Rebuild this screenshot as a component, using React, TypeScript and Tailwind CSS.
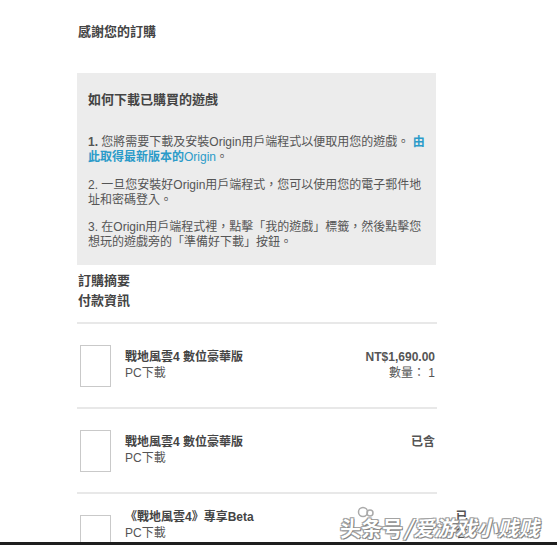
const FONT = "font-['Liberation_Sans','Noto_Sans_CJK_TC',sans-serif]";

type ItemData = { title: string; sub: string; right: string; qty?: string; extra?: string; lift?: boolean };

const items: ItemData[] = [
  { title: "戰地風雲4 數位豪華版", sub: "PC下載", right: "NT$1,690.00", qty: "數量： 1" },
  { title: "戰地風雲4 數位豪華版", sub: "PC下載", right: "已含" },
  {
    title: "《戰地風雲4》專享Beta",
    sub: "PC下載",
    right: "已含",
    extra: "可搶先參與《戰地風雲4》封閉測試，並於開放測試前取得資格",
    lift: true,
  },
];

const Divider = () => <div className="h-[2px] bg-[#e8e8e8]" />;

const Item = ({ title, sub, right, qty, extra, lift }: ItemData) => (
  <div className="flex pt-[21px] pb-[20px]">
    <div className="w-[31px] h-[42px] ml-[3px] border border-[#c9c9c9] bg-white shrink-0" />
    <div className={`flex-1 pl-[14px] text-[12px] leading-[16px] ${lift ? "-mt-[6px]" : "pt-[4px]"}`}>
      <div className="font-bold text-[#444]">{title}</div>
      <div className="text-[#555]">{sub}</div>
      {extra && <div className="text-[#555] whitespace-nowrap">{extra}</div>}
    </div>
    <div className={`text-right text-[12px] leading-[16px] pr-[2px] ${lift ? "-mt-[6px]" : "pt-[4px]"}`}>
      <div className="font-bold text-[#555]">{right}</div>
      {qty && <div className="text-[#555]">{qty}</div>}
    </div>
  </div>
);

export default function App() {
  return (
    <div className={`relative w-full h-[545px] bg-white overflow-hidden flex flex-col ${FONT}`}>
      <div className="flex-1 overflow-hidden">
        <div className="ml-[77px] w-[360px] pt-[24px]">
          <h1 className="pl-px text-[13px] leading-[16px] font-bold text-[#444]">感謝您的訂購</h1>

          {/* How to download */}
          <div className="mt-[33px] bg-[#ececec] px-[11px] pt-[19px] pb-[15px] w-[359px]">
            <h2 className="text-[13px] leading-[16px] font-bold text-[#444]">如何下載已購買的遊戲</h2>
            <div className="mt-[27px] text-[12px] leading-[15px] text-[#555] whitespace-nowrap">
              <p>
                <span className="font-bold">1.</span> 您將需要下載及安裝Origin用戶端程式以便取用您的遊戲。{" "}
                <span className="font-bold text-[#2b9bc9]">由</span>
                <br />
                <span className="font-bold text-[#2b9bc9]">此取得最新版本的</span>
                <span className="text-[#2b9bc9]">Origin</span>。
              </p>
              <p className="mt-[13px]">
                2. 一旦您安裝好Origin用戶端程式，您可以使用您的電子郵件地
                <br />
                址和密碼登入。
              </p>
              <p className="mt-[12px]">
                3. 在Origin用戶端程式裡，點擊「我的遊戲」標籤，然後點擊您
                <br />
                想玩的遊戲旁的「準備好下載」按鈕。
              </p>
            </div>
          </div>

          <div className="mt-[8px] pl-px text-[13px] leading-[16px] font-bold text-[#444]">訂購摘要</div>
          <div className="mt-[4px] pl-px text-[13px] leading-[16px] font-bold text-[#444]">付款資訊</div>

          <div className="mt-[13px]">
            {items.map((it, i) => (
              <div key={i}>
                <Divider />
                <Item {...it} />
              </div>
            ))}
          </div>
        </div>
      </div>
      <div className="h-[3px] bg-[#1e1e1e] shrink-0" />

      {/* watermark */}
      <div className="absolute left-[340px] top-[513px] flex items-center whitespace-nowrap text-[21px] leading-[28px] font-bold text-white font-['Noto_Sans_CJK_SC',sans-serif] [text-shadow:0_0_1px_#666,1px_1px_0_#888,-1px_-1px_0_#aaa,1px_-1px_0_#aaa,-1px_1px_0_#aaa]">
        <svg className="absolute left-[17px] -top-[7px]" width="18" height="12" viewBox="0 0 18 12">
          <circle cx="6" cy="6" r="4.5" fill="none" stroke="#aaa" strokeWidth="1.5" />
          <circle cx="13" cy="7" r="3" fill="none" stroke="#aaa" strokeWidth="1.5" />
        </svg>
        <span>头条号</span>
        <span className="mx-[1px] italic">/</span>
        <span className="italic">爱游戏小贱贱</span>
      </div>
    </div>
  );
}
